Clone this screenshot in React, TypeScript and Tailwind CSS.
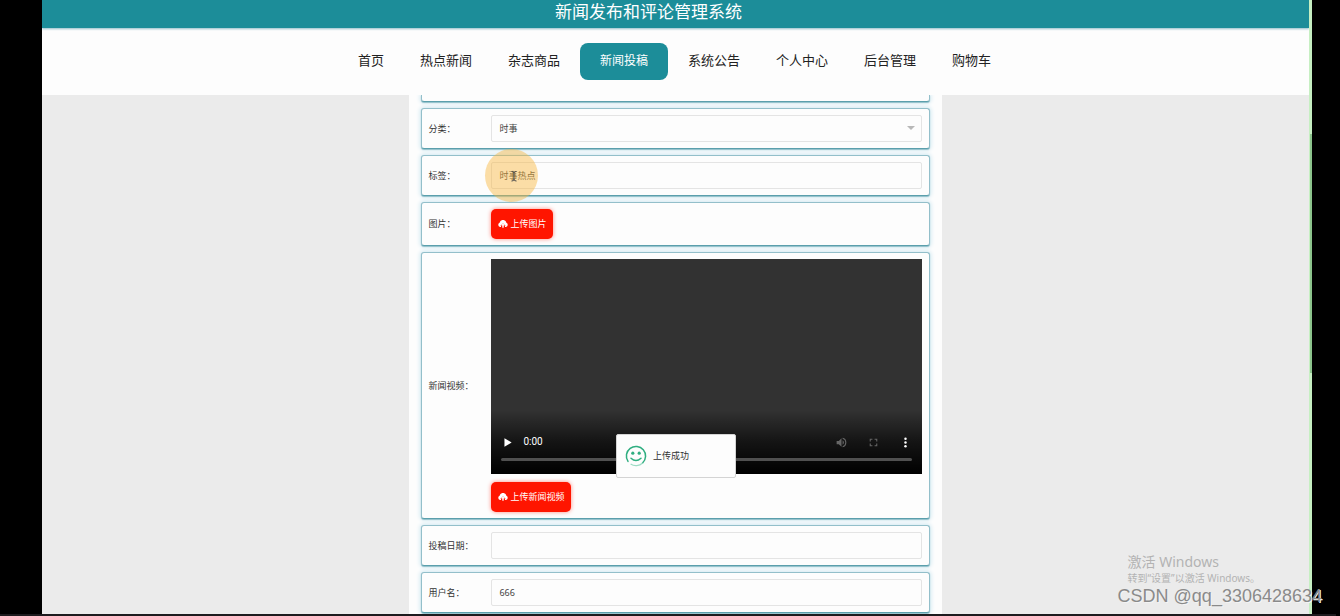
import React from "react";
import clsx from "clsx";

const NAV_ITEMS = [
  "首页",
  "热点新闻",
  "杂志商品",
  "新闻投稿",
  "系统公告",
  "个人中心",
  "后台管理",
  "购物车",
];

const inputClass =
  "block h-[27px] w-full rounded-xs border border-[#e4e4e4] bg-[#fdfdfd] px-[7px] text-[9px] text-[#444] outline-none";

// --- Icons ---
const CloudUploadIcon = () => (
  <svg viewBox="0 0 20 16" className="h-2 w-[10px] shrink-0" aria-hidden="true">
    <path
      fill="currentColor"
      d="M6 14H4.6A4.4 4.4 0 0 1 3.2 5.6 6.9 6.9 0 0 1 16.8 5.6 4.4 4.4 0 0 1 15.4 14H14V12H15.4L10 6.6 4.6 12H6Z"
    />
    <path fill="currentColor" d="M10 6 13.6 11H11.4V15.6H8.6V11H6.4Z" />
  </svg>
);

const SmileIcon = () => (
  <svg viewBox="0 0 22 22" className="size-[22px] shrink-0" fill="none" aria-hidden="true">
    <path
      d="M3 16.4A9.6 9.6 0 1 1 17.6 18"
      stroke="#2fae80"
      strokeWidth="1.5"
      strokeLinecap="round"
    />
    <path d="M5.6 19A9.6 9.6 0 0 0 17.6 18" stroke="#9edcc5" strokeWidth="1.3" />
    <circle cx="7.8" cy="8.2" r="1.6" fill="#2fae80" />
    <circle cx="14.2" cy="8.2" r="1.6" fill="#2fae80" />
    <path
      d="M6 13.2Q11 17.8 16 13.2"
      stroke="#2fae80"
      strokeWidth="1.5"
      strokeLinecap="round"
    />
  </svg>
);

const VolumeIcon = () => (
  <svg viewBox="0 0 24 24" className="size-[13px]" fill="currentColor" aria-hidden="true">
    <path d="M3 9v6h4l5 5V4L7 9H3zm13.5 3A4.5 4.5 0 0 0 14 7.97v8.05A4.5 4.5 0 0 0 16.5 12zM14 3.23v2.06a7 7 0 0 1 0 13.42v2.06a9 9 0 0 0 0-17.54z" />
  </svg>
);

const FullscreenIcon = () => (
  <svg viewBox="0 0 24 24" className="size-[13px]" fill="currentColor" aria-hidden="true">
    <path d="M7 14H5v5h5v-2H7v-3zM5 10h2V7h3V5H5v5zm12 7h-3v2h5v-5h-2v3zM14 5v2h3v3h2V5h-5z" />
  </svg>
);

const MoreIcon = () => (
  <svg viewBox="0 0 24 24" className="size-[13px]" fill="currentColor" aria-hidden="true">
    <circle cx="12" cy="5" r="2.3" />
    <circle cx="12" cy="12" r="2.3" />
    <circle cx="12" cy="19" r="2.3" />
  </svg>
);

// --- Form row ---
const rowBorder =
  "border border-[#93bfca] border-b-[#5b9fac] bg-[#fdfdfd] shadow-[0_1px_1px_#8fbfca,0_0_4px_1px_#cfe8f1]";

const FormRow = ({
  label,
  htmlFor,
  children,
}: {
  label: string;
  htmlFor?: string;
  children: React.ReactNode;
}) => (
  <div className={clsx("flex items-center rounded-[3px] py-1.5 pr-[7px] pl-1.5", rowBorder)}>
    <label htmlFor={htmlFor} className="w-[63px] shrink-0 text-[9px] text-[#333]">
      {label}
    </label>
    <div className="min-w-0 flex-1">{children}</div>
  </div>
);

const UploadButton = ({ id, children }: { id: string; children: React.ReactNode }) => (
  <button
    id={id}
    type="button"
    className="flex h-[30px] items-center gap-[2px] rounded-[5px] bg-[#ff1500] px-[7px] text-[9px] text-white shadow-[0_0_4px_#ff8a80]"
  >
    <CloudUploadIcon />
    {children}
  </button>
);

const VideoPlayer = () => (
  <div className="flex aspect-[2/1] w-full flex-col justify-end bg-[#323232]">
    <div className="bg-linear-to-b from-transparent via-black/60 to-black px-[10px] pt-[22px] pb-[13px]">
      <div className="flex items-center text-white">
        <button type="button" aria-label="play" className="flex w-[22px]">
          <svg viewBox="0 0 12 12" className="size-[13px]" fill="currentColor" aria-hidden="true">
            <path d="M3.2 2v8L9.8 6z" />
          </svg>
        </button>
        <span className="font-[Roboto,sans-serif] text-[10px] leading-5">0:00</span>
        <div className="ml-auto flex items-center gap-[19px]">
          <button type="button" aria-label="mute" className="text-[#666]">
            <VolumeIcon />
          </button>
          <button type="button" aria-label="fullscreen" className="text-[#666]">
            <FullscreenIcon />
          </button>
          <button type="button" aria-label="more">
            <MoreIcon />
          </button>
        </div>
      </div>
      <input
        type="range"
        aria-label="progress"
        defaultValue={0}
        className="mt-[6px] block h-[3px] w-full appearance-none rounded-full bg-[#505050] [&::-webkit-slider-thumb]:size-0 [&::-webkit-slider-thumb]:appearance-none"
      />
    </div>
  </div>
);

export default function App() {
  return (
    <div className="relative flex h-screen flex-col overflow-hidden bg-black font-['Noto_Sans','Noto_Sans_CJK_SC',sans-serif]">
      <div className="relative mr-7 ml-[42px] flex min-h-0 flex-1">
        <div className="flex min-w-0 flex-1 flex-col overflow-hidden bg-[#ebebeb]">
          <header className="relative z-10 flex h-7 shrink-0 items-center justify-center bg-[#1c8d99] pr-[54px] pb-1 shadow-[0_1px_2px_#8fbcc8]">
            <h1 className="text-[17px] leading-6 text-white">新闻发布和评论管理系统</h1>
          </header>

          <nav className="flex h-[67px] shrink-0 items-center justify-center gap-1 bg-[#fdfdfd] pr-[2px]">
            {NAV_ITEMS.map((item) => (
              <a
                key={item}
                href="#"
                className={clsx(
                  "flex h-[37px] items-center rounded-lg pb-px",
                  item === "新闻投稿"
                    ? "bg-[#1c8d99] px-5 text-xs text-white"
                    : "px-4 text-[13px] text-[#222]"
                )}
              >
                {item}
              </a>
            ))}
          </nav>

          <main className="mx-auto min-h-0 w-[42%] flex-1 overflow-hidden bg-[#fdfdfd] px-3">
            <form className="flex flex-col gap-1.5">
              {/* tail of the row that is scrolled under the nav */}
              <div className={clsx("h-[7px] rounded-b-[3px] border-t-0", rowBorder)} />

              <FormRow label="分类：" htmlFor="category">
                <div className="relative">
                  <select id="category" className={clsx(inputClass, "appearance-none")}>
                    <option>时事</option>
                  </select>
                  <svg
                    viewBox="0 0 8 4"
                    className="pointer-events-none absolute top-[11px] right-[7px] h-1 w-2"
                    aria-hidden="true"
                  >
                    <path d="M0 0h8L4 4z" fill="#b8b8b8" />
                  </svg>
                </div>
              </FormRow>

              <FormRow label="标签：" htmlFor="tag">
                <div className="relative">
                  <input id="tag" type="text" defaultValue="时事热点" className={inputClass} />
                  {/* mouse pointer highlight */}
                  <div className="pointer-events-none absolute -top-[13px] -left-[6px] flex size-[53px] items-center justify-center rounded-full bg-[#f9b53c]/45">
                    <svg viewBox="0 0 8 12" className="ml-1 h-3 w-2" fill="none" aria-hidden="true">
                      <path
                        d="M1.5 1.5Q4 1.5 4 3Q4 1.5 6.5 1.5M4 3v7M1.5 11Q4 11 4 9.5Q4 11 6.5 11"
                        stroke="#4a4a4a"
                      />
                    </svg>
                  </div>
                </div>
              </FormRow>

              <FormRow label="图片：" htmlFor="image">
                <UploadButton id="image">上传图片</UploadButton>
              </FormRow>

              <FormRow label="新闻视频：" htmlFor="video">
                <div className="flex flex-col items-start gap-2">
                  <VideoPlayer />
                  <UploadButton id="video">上传新闻视频</UploadButton>
                </div>
              </FormRow>

              <FormRow label="投稿日期：" htmlFor="date">
                <input id="date" type="text" className={inputClass} />
              </FormRow>

              <FormRow label="用户名：" htmlFor="username">
                <input id="username" type="text" defaultValue="666" className={inputClass} />
              </FormRow>
            </form>
          </main>
        </div>

        {/* scrollbar */}
        <div className="w-[3px] bg-[#c6efc2] pt-[134px]">
          <div className="ml-px h-[239px] bg-[#8cc48c]" />
        </div>

        {/* upload message */}
        <div
          role="status"
          className="absolute top-[434px] left-1/2 -ml-px flex h-11 w-[120px] -translate-x-1/2 items-center gap-1.5 rounded-xs border border-[#d4d4d4] bg-[#fdfdfd] px-[8px] text-[9px] text-[#333]"
        >
          <SmileIcon />
          上传成功
        </div>

        {/* windows activation notice */}
        <div className="absolute right-[52px] bottom-[29px] text-[#b3b3b3]">
          <p className="text-sm leading-[18px]">激活 Windows</p>
          <p className="text-[10px] leading-[14px]">转到“设置”以激活 Windows。</p>
        </div>
      </div>

      <div className="mr-1 h-[2px] shrink-0 bg-[#1d1b1e]" />

      <p className="absolute right-[18px] bottom-2 font-['Liberation_Sans',sans-serif] text-lg leading-6 text-[#8a8a8a] [text-shadow:1px_1px_0_#f4f4f4]">
        CSDN @qq_3306428634
      </p>
    </div>
  );
}
